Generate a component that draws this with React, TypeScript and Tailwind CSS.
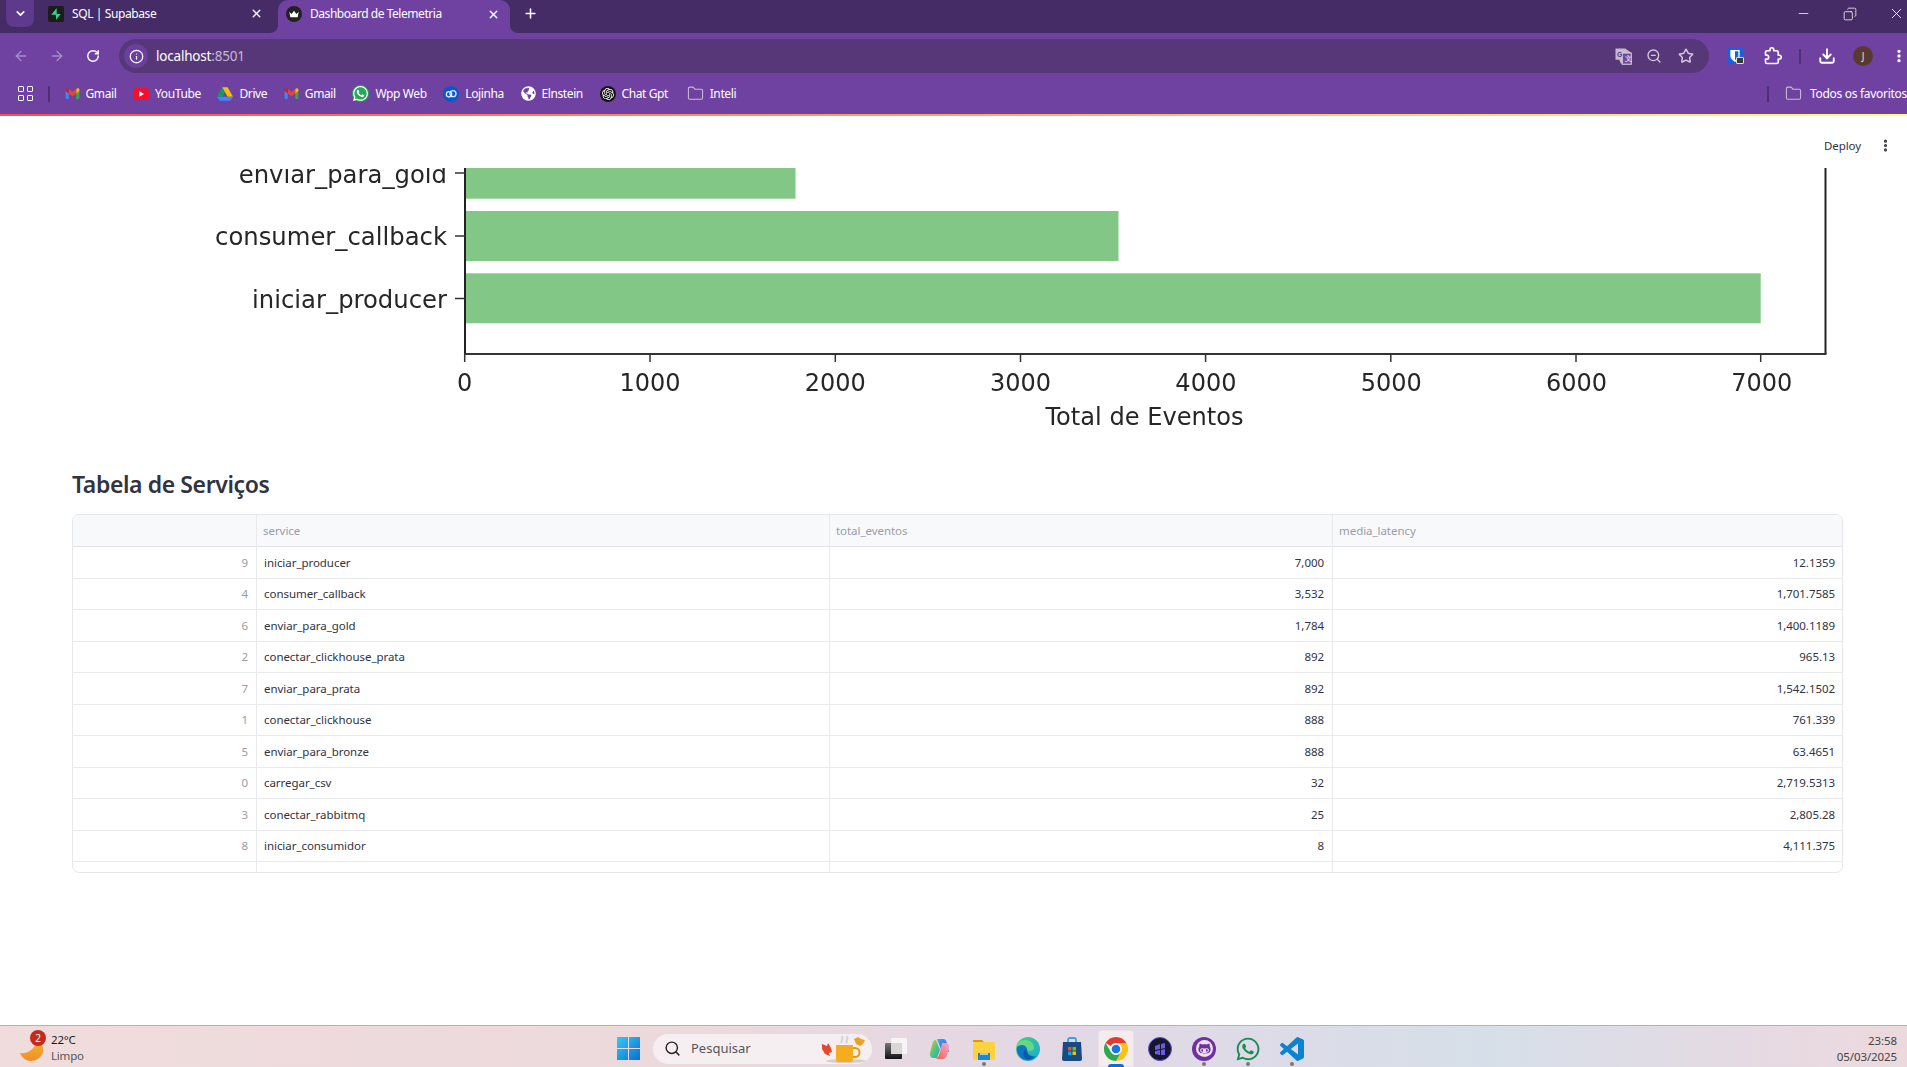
import React from "react";
import { ArrowLeft, ArrowRight, RotateCw, Info, ZoomOut, Star, Download, EllipsisVertical, Minus, X, Plus, ChevronDown, Search, Folder, Copy } from "lucide-react";
import { FaWhatsapp, FaGithubAlt, FaGlobeAmericas } from "react-icons/fa";
import { SiOpenai } from "react-icons/si";

const Gmail = () => (
  <svg width="15" height="16" viewBox="0 0 24 24" className="shrink-0">
    <path d="M1 20V6l5 4v10H3a2 2 0 0 1-2-2z" fill="#4285f4" />
    <path d="M23 20V6l-5 4v10h3a2 2 0 0 0 2-2z" fill="#34a853" />
    <path d="M18 4v7l5-4V5c0-2-2-3-3.500-2z" fill="#fbbc04" />
    <path d="M6 4v7l6 4.500 6-4.500V4l-6 4.500z" fill="#ea4335" />
    <path d="M1 5v2l5 4V4L4.500 3C3 2 1 3 1 5z" fill="#c5221f" />
  </svg>
);
const YouTube = () => (
  <svg width="16" height="16" viewBox="0 0 24 24" className="shrink-0">
    <rect x="0" y="3" width="24" height="18" rx="5" fill="#f50f2d" />
    <path d="M9.500 8v8l7-4z" fill="#fff" />
  </svg>
);
const Drive = () => (
  <svg width="16" height="16" viewBox="0 0 24 24" className="shrink-0">
    <path d="M8 2h8l-8 14H0z" fill="#0f9d58" />
    <path d="M16 2l8 14h-8L8 2z" fill="#fbbc04" />
    <path d="M0 16h24l-4 6H4z" fill="#4285f4" />
  </svg>
);
const Lojinha = () => (
  <svg width="16" height="16" viewBox="0 0 24 24" className="shrink-0">
    <circle cx="12" cy="12" r="12" fill="#0b57c9" />
    <circle cx="9" cy="12.500" r="4" fill="none" stroke="#dbe8ff" strokeWidth="2" />
    <circle cx="15" cy="11.500" r="4.500" fill="none" stroke="#dbe8ff" strokeWidth="2" />
  </svg>
);
const Bookmark = ({ icon, label }: { icon: React.ReactNode; label: string }) => (
  <div className="flex items-center gap-[6px] shrink-0">
    {icon}
    <span className="text-white text-[12px] leading-none tracking-[-0.4px]">{label}</span>
  </div>
);
const Supabase = () => (
  <svg width="16" height="16" viewBox="0 0 24 24" className="shrink-0">
    <rect width="24" height="24" rx="3" fill="#1c1c1c" />
    <path d="M13 3v9h6l-7 9v-8H5z" fill="#3ecf8e" />
  </svg>
);
const Crown = () => (
  <svg width="16" height="16" viewBox="0 0 24 24" className="shrink-0">
    <circle cx="12" cy="12" r="12" fill="#222" />
    <path d="M5 9l3.500 3L12 7l3.500 5L19 9l-1.500 8h-11z" fill="#fff" />
  </svg>
);
const Translate = () => (
  <svg width="18" height="18" viewBox="0 0 24 24" className="shrink-0">
    <path d="M2 2h13l7 5v15H9l-2-5H2z" fill="#c5bacf" />
    <rect x="11" y="8" width="12" height="15" fill="#6e4a9a" stroke="#d5cbdc" strokeWidth="1.500" />
    <text x="4" y="13" fontSize="9" fontWeight="700" fill="#5a3a80" fontFamily="Liberation Sans">G</text>
    <text x="14" y="19" fontSize="9" fontWeight="700" fill="#e0d8e6" fontFamily="Liberation Sans">文</text>
  </svg>
);
const Extension = () => (
  <svg width="18" height="18" viewBox="0 0 24 24" className="ml-[21px] shrink-0" fill="none" stroke="#fff" strokeWidth="2.200" strokeLinejoin="round">
    <path d="M20.500 11H19V7a2 2 0 0 0-2-2h-4V3.500a2.500 2.500 0 0 0-5 0V5H4a2 2 0 0 0-2 2v3.800h1.500a2.700 2.700 0 0 1 0 5.400H2V20a2 2 0 0 0 2 2h13a2 2 0 0 0 2-2v-4h1.500a2.500 2.500 0 0 0 0-5z" />
  </svg>
);
const Bitwarden = () => (
  <div className="relative w-[16px] h-[16px] bg-[#1a5fe0] shrink-0">
    <svg width="16" height="16" viewBox="0 0 24 24">
      <path d="M5 3h14v9c0 4-4 7-7 9-3-2-7-5-7-9z" fill="#fff" />
      <path d="M12 5h5v7c0 3-3 5-5 6.500z" fill="#1a5fe0" />
    </svg>
    <div className="absolute right-[-1px] bottom-0 w-[8px] h-[7px] rounded-[1px] bg-[#3a3a3a] border border-[#ddd]" />
  </div>
);
const WinLogo = () => (
  <svg width="23" height="23" viewBox="0 0 23 23" className="shrink-0">
    <defs>
      <linearGradient id="wl" x1="0" y1="0" x2="1" y2="1">
        <stop offset="0" stopColor="#38c8f5" />
        <stop offset="1" stopColor="#0a6fd0" />
      </linearGradient>
    </defs>
    <path d="M0 0h11v11H0zM12 0h11v11H12zM0 12h11v11H0zM12 12h11v11H12z" fill="url(#wl)" />
  </svg>
);
const Cup = () => (
  <svg width="48" height="30" viewBox="0 0 48 30" className="shrink-0">
    <ellipse cx="26" cy="27" rx="20" ry="2" fill="#d8cfc8" />
    <path d="M2 10l5 2 1-3 3 5 1 4-3 1 1 3-5-2-3-5z" fill="#e2492f" />
    <path d="M34 5l4-2 3 2 4 1-2 4-3 2-4-2z" fill="#f0a020" />
    <path d="M16 11h17v15a2 2 0 0 1-2 2H18a2 2 0 0 1-2-2z" fill="#f5ac1f" />
    <path d="M33 14h2a4 4 0 0 1 0 9h-2" fill="none" stroke="#e59a12" strokeWidth="2" />
    <path d="M22 9c-2-3 2-3 0-7M27 9c-2-3 2-3 0-7" fill="none" stroke="#d8d0d0" strokeWidth="2" />
  </svg>
);
const TaskView = () => (
  <svg width="24" height="24" viewBox="0 0 24 24">
    <defs>
      <linearGradient id="tv" x1="0" y1="0" x2="0" y2="1">
        <stop offset="0" stopColor="#777" />
        <stop offset="1" stopColor="#111" />
      </linearGradient>
    </defs>
    <rect x="7" y="1" width="16" height="16" rx="1" fill="#f7f4f5" />
    <rect x="1" y="6" width="17" height="16" rx="1" fill="url(#tv)" />
    <rect x="7" y="6" width="11" height="11" fill="#d8d6d7" />
  </svg>
);
const Copilot = () => (
  <svg width="24" height="24" viewBox="0 0 24 24">
    <defs>
      <linearGradient id="c1" x1="0" y1="0" x2="1" y2="1">
        <stop offset="0" stopColor="#2fb5e8" />
        <stop offset="0.5" stopColor="#3f7cf0" />
        <stop offset="1" stopColor="#a54fd8" />
      </linearGradient>
      <linearGradient id="c2" x1="0" y1="0" x2="1" y2="1">
        <stop offset="0" stopColor="#f2c12e" />
        <stop offset="0.5" stopColor="#50c87a" />
        <stop offset="1" stopColor="#2fa0d8" />
      </linearGradient>
      <linearGradient id="c3" x1="1" y1="0" x2="0" y2="1">
        <stop offset="0" stopColor="#f7a8d0" />
        <stop offset="1" stopColor="#f0604a" />
      </linearGradient>
    </defs>
    <path d="M9 2h6c2 0 3 1 3.500 3L21 15h-7z" fill="url(#c1)" />
    <path d="M8 3c-2 0-3 1-3.500 3L2 16c-.500 3 1 5 3.500 5H9l3-8z" fill="url(#c2)" />
    <path d="M14 6h4c2 0 3 2 3 4l-2 8c-.500 2-2 4-4 4H8c3-2 4-6 6-16z" fill="url(#c3)" />
  </svg>
);
const Explorer = () => (
  <svg width="24" height="24" viewBox="0 0 24 24">
    <path d="M1 3h9l2 2h-11z" fill="#d99a10" />
    <rect x="1" y="5" width="22" height="18" rx="1.500" fill="#fcd33f" />
    <rect x="6" y="16" width="12" height="7" fill="#1f86d6" />
    <rect x="8" y="16" width="8" height="2" fill="#8fd0f5" />
  </svg>
);
const Edge = () => (
  <svg width="24" height="24" viewBox="0 0 24 24">
    <defs>
      <linearGradient id="e1" x1="0" y1="0" x2="1" y2="1">
        <stop offset="0" stopColor="#37d67a" />
        <stop offset="1" stopColor="#1fa8d8" />
      </linearGradient>
    </defs>
    <circle cx="12" cy="12" r="12" fill="url(#e1)" />
    <path d="M0 12c0-6 4-9 9-9 5 0 9 3 9 8 0 2-2 3-4 3-2 0-3-1-3-2 0-3-9-5-11 0z" fill="#7de07a" opacity="0.7" />
    <path d="M1 10c3-3 9-3 10 2 0 5 4 8 9 7-3 4-7 5-10 4C4 22 0 16 1 10z" fill="#1173c6" />
    <path d="M10 12c0 5 4 8 8 8-2 2-6 3-8 2-3-2-4-7 0-10z" fill="#0d5aa8" />
  </svg>
);
const Store = () => (
  <svg width="24" height="24" viewBox="0 0 24 24">
    <path d="M8 6V3a2 2 0 0 1 2-2h4a2 2 0 0 1 2 2v3" fill="none" stroke="#3aa0e0" strokeWidth="1.800" />
    <path d="M3 5h18l1 17a2 2 0 0 1-2 2H4a2 2 0 0 1-2-2z" fill="#1b4a80" />
    <rect x="8" y="10" width="3.500" height="3.500" fill="#f25022" />
    <rect x="12.500" y="10" width="3.500" height="3.500" fill="#7fba00" />
    <rect x="8" y="14.500" width="3.500" height="3.500" fill="#00a4ef" />
    <rect x="12.500" y="14.500" width="3.500" height="3.500" fill="#ffb900" />
  </svg>
);
const Chrome = () => (
  <svg width="24" height="24" viewBox="0 0 24 24">
    <path d="M12 0A12 12 0 0 1 22.400 6H12A6 6 0 0 0 6.800 9L1.600 6A12 12 0 0 1 12 0z" fill="#e33b2e" />
    <path d="M22.400 6A12 12 0 0 1 12 24L17.200 15A6 6 0 0 0 12 6z" fill="#fbc116" />
    <path d="M1.600 6L6.800 15A6 6 0 0 0 17.200 15L12 24A12 12 0 0 1 1.600 6z" fill="#2da94f" />
    <circle cx="12" cy="12" r="5.500" fill="#fff" />
    <circle cx="12" cy="12" r="4.300" fill="#1a73e8" />
  </svg>
);
const Dark = () => (
  <svg width="24" height="24" viewBox="0 0 24 24">
    <circle cx="12" cy="12" r="11.500" fill="#16162c" stroke="#5a4fe0" strokeWidth="1" />
    <path d="M7 9l5-2v5l-5 1zM13 7l4-1v5l-4 1zM7 14l5-1v5l-5-1zM13 13l4-1v6l-4 0z" fill="#6a5ae0" />
  </svg>
);
const GithubApp = () => (
  <div className="w-[24px] h-[24px] rounded-full bg-[#7030a0] flex items-center justify-center">
    <div className="w-[17px] h-[17px] rounded-full bg-[#ece2f0] flex items-center justify-center">
      <FaGithubAlt className="text-[#7030a0] text-[13px]" />
    </div>
  </div>
);
const VSCode = () => (
  <svg width="24" height="24" viewBox="0 0 24 24">
    <path
      d="M23.150 2.587L18.210.21a1.494 1.494 0 0 0-1.705.29l-9.460 8.630-4.120-3.128a.999.999 0 0 0-1.276.057L.327 7.261A1 1 0 0 0 .326 8.740L3.899 12 .326 15.260a1 1 0 0 0 .001 1.479L1.650 17.940a.999.999 0 0 0 1.276.057l4.120-3.128 9.460 8.630a1.492 1.492 0 0 0 1.704.29l4.942-2.377A1.500 1.500 0 0 0 24 20.060V3.939a1.500 1.500 0 0 0-.850-1.352zm-5.146 14.861L10.826 12l7.178-5.448v10.896z"
      fill="#0d82d2"
    />
  </svg>
);

const rows = [
  ["9", "iniciar_producer", "7,000", "12.1359"],
  ["4", "consumer_callback", "3,532", "1,701.7585"],
  ["6", "enviar_para_gold", "1,784", "1,400.1189"],
  ["2", "conectar_clickhouse_prata", "892", "965.13"],
  ["7", "enviar_para_prata", "892", "1,542.1502"],
  ["1", "conectar_clickhouse", "888", "761.339"],
  ["5", "enviar_para_bronze", "888", "63.4651"],
  ["0", "carregar_csv", "32", "2,719.5313"],
  ["3", "conectar_rabbitmq", "25", "2,805.28"],
  ["8", "iniciar_consumidor", "8", "4,111.375"],
];

const Chart = () => (
  <svg viewBox="72 168 1770 272" className="block w-[1770px] h-[272px] blur-[0.4px]" fontFamily="DejaVu Sans, sans-serif" fill="#262626">
    <rect x="466" y="150" width="329.500" height="48.700" fill="#83c786" />
    <rect x="466" y="211" width="652.500" height="50" fill="#83c786" />
    <rect x="466" y="273.300" width="1294.700" height="50" fill="#83c786" />
    <path d="M465 160V354M1825.500 160V354" stroke="#222" strokeWidth="2" fill="none" />
    <path d="M464 354H1826.500" stroke="#333" strokeWidth="2" fill="none" />
    {[464.7, 650, 835.3, 1020.5, 1205.6, 1390.8, 1576, 1760.7].map((x) => (
      <path key={x} d={`M${x} 353V362`} stroke="#333" strokeWidth="1.500" />
    ))}
    {[173, 236, 298.500].map((y) => (
      <path key={y} d={`M455 ${y}H465`} stroke="#333" strokeWidth="1.500" />
    ))}
    {[
      ["enviar_para_gold", 182.7],
      ["consumer_callback", 245],
      ["iniciar_producer", 307.7],
    ].map(([t, y]) => (
      <text key={t as string} x="447" y={y as number} textAnchor="end" fontSize="24.300">
        {t}
      </text>
    ))}
    {[0, 1000, 2000, 3000, 4000, 5000, 6000, 7000].map((v, i) => (
      <text key={v} x={464.7 + 185.3 * i} y="390.500" textAnchor="middle" fontSize="24">
        {v}
      </text>
    ))}
    <text x="1144.500" y="424.500" textAnchor="middle" fontSize="24.100">
      Total de Eventos
    </text>
  </svg>
);

const Flare = ({ side }: { side: "l" | "r" }) =>
  side === "l" ? (
    <svg width="8" height="8" viewBox="0 0 8 8" className="absolute bottom-0 left-[-8px]">
      <path d="M8 0v8H0c4 0 8-3 8-8z" fill="#6f42a1" />
    </svg>
  ) : (
    <svg width="8" height="8" viewBox="0 0 8 8" className="absolute bottom-0 right-[-8px]">
      <path d="M0 0v8h8C4 8 0 5 0 0z" fill="#6f42a1" />
    </svg>
  );

export default function App() {
  return (
    <div className="h-screen w-full flex flex-col overflow-hidden bg-white font-['Noto_Sans',sans-serif]">
      {/* tab strip */}
      <div className="h-[33px] shrink-0 bg-[#452c66] flex items-start text-white">
        <div className="ml-[6px] mt-0 w-[28px] h-[27px] rounded-b-lg bg-[#5e3a8c] flex items-center justify-center">
          <ChevronDown size={13} strokeWidth={3} />
        </div>
        <div className="w-[244px] h-[27px] flex items-center pl-[14px] pr-[15px] gap-[8px]">
          <Supabase />
          <span className="text-[12px] leading-none tracking-[-0.4px]">SQL | Supabase</span>
          <X size={13} strokeWidth={2.5} className="ml-auto" />
        </div>
        <div className="relative w-[232px] h-[33px] rounded-t-[10px] bg-[#6f42a1] flex items-center pl-[8px] pr-[10px] gap-[8px] pb-[5px]">
          <Flare side="l" />
          <Crown />
          <span className="text-[12px] leading-none tracking-[-0.45px]">Dashboard de Telemetria</span>
          <X size={13} strokeWidth={2.5} className="ml-auto" />
          <Flare side="r" />
        </div>
        <div className="ml-[13px] h-[27px] flex items-center">
          <Plus size={15} strokeWidth={2.5} />
        </div>
        <div className="ml-auto h-[27px] flex items-center">
          <Minus size={15} strokeWidth={1.2} className="mr-[32px]" />
          <Copy size={14} strokeWidth={1.3} className="mr-[31px] -scale-x-100" />
          <X size={17} strokeWidth={1.2} className="mr-[2px]" />
        </div>
      </div>

      {/* toolbar */}
      <div className="h-[40px] shrink-0 bg-[#6f42a1] flex items-center pt-[6px] text-white">
        <ArrowLeft size={16} className="ml-[13px] text-[#a68cc4]" />
        <ArrowRight size={16} className="ml-[20px] text-[#a68cc4]" />
        <RotateCw size={14} strokeWidth={2.5} className="ml-[21px]" />
        <div className="ml-[19px] w-[1590px] h-[34px] rounded-full bg-[#563878] flex items-center pl-[5px]">
          <div className="w-[24px] h-[24px] rounded-full bg-[#6b3f9c] flex items-center justify-center">
            <Info size={15} />
          </div>
          <span className="ml-[8px] text-[13.500px] leading-none tracking-[-0.2px] pt-[1px]">
            localhost<span className="text-[#c6b6d8]">:8501</span>
          </span>
          <div className="ml-auto flex items-center pr-[15px] text-[#d4c8e0]">
            <Translate />
            <ZoomOut size={16} className="ml-[14px]" />
            <Star size={16} strokeWidth={2.2} className="ml-[16px]" />
          </div>
        </div>
        <div className="ml-[18px]">
          <Bitwarden />
        </div>
        <Extension />
        <div className="ml-[17px] w-[2px] h-[15px] bg-[#4d2f72]" />
        <Download size={18} strokeWidth={2.5} className="ml-[17px]" />
        <div className="ml-[17px] w-[20px] h-[20px] rounded-full bg-[#5a3a2e] flex items-center justify-center text-[10px] leading-none text-[#e8dcd4]">J</div>
        <EllipsisVertical size={16} strokeWidth={3} className="ml-[18px]" />
      </div>

      {/* bookmarks */}
      <div className="h-[41px] shrink-0 bg-[#6f42a1] flex items-center text-white">
        <div className="ml-[18px] grid grid-cols-2 gap-[3px] w-[15px] shrink-0">
          {[0, 1, 2, 3].map((i) => (
            <div key={i} className="h-[6px] border-[1.5px] border-white rounded-[1px]" />
          ))}
        </div>
        <div className="ml-[15px] w-[1.5px] h-[16px] bg-[#4d2f72]" />
        <div className="ml-[15px] flex items-center gap-[16.700px]">
          <Bookmark icon={<Gmail />} label="Gmail" />
          <Bookmark icon={<YouTube />} label="YouTube" />
          <Bookmark icon={<Drive />} label="Drive" />
          <Bookmark icon={<Gmail />} label="Gmail" />
          <Bookmark
            icon={
              <div className="w-[17px] h-[17px] rounded-full bg-[#25a85a] shrink-0">
                <FaWhatsapp className="text-[17px]" />
              </div>
            }
            label="Wpp Web"
          />
          <Bookmark icon={<Lojinha />} label="Lojinha" />
          <Bookmark icon={<FaGlobeAmericas className="text-[15px] shrink-0" />} label="Elnstein" />
          <Bookmark
            icon={
              <div className="w-[16px] h-[16px] rounded-full bg-[#151515] flex items-center justify-center shrink-0">
                <SiOpenai className="text-[12px] text-white" />
              </div>
            }
            label="Chat Gpt"
          />
          <div className="ml-[2px]">
            <Bookmark icon={<Folder size={17} strokeWidth={1.5} className="text-[#c9bcd6]" />} label="Inteli" />
          </div>
        </div>
        <div className="ml-auto flex items-center shrink-0">
          <div className="w-[2px] h-[16px] bg-[#4d2f72]" />
          <Folder size={17} strokeWidth={1.5} className="ml-[16px] text-[#c9bcd6]" />
          <span className="ml-[8px] text-[12px] leading-none tracking-[-0.3px] whitespace-nowrap w-[97px]">Todos os favoritos</span>
        </div>
      </div>

      {/* streamlit */}
      <main className="relative flex-1 min-h-0 bg-white pl-[72px] pr-[64px] pt-[54px]">
        <div className="absolute top-0 left-0 right-0 h-[2px] bg-[linear-gradient(to_right,#ff4b4b,#fffd80)]" />
        <div className="absolute top-[24px] right-[14px] flex items-center text-[#31333f]">
          <span className="text-[11.500px] leading-none tracking-[-0.1px]">Deploy</span>
          <EllipsisVertical size={15} strokeWidth={3} className="ml-[17px]" />
        </div>
        <Chart />
        <h2 className="mt-[28px] h-[32px] flex items-center text-[23px] leading-none font-semibold text-[#31333f] tracking-[-0.4px]">Tabela de Serviços</h2>
        <div className="mt-[14px] h-[359px] rounded-[7px] border border-[#e6e7eb] overflow-hidden text-[11.500px] tracking-[-0.05px]">
          <div className="flex h-[32px] bg-[#f8f9fb] border-b border-[#e3e4ea] text-[#9a9ca8]">
            <div className="w-[184px] shrink-0 border-r border-[#e9eaee]" />
            <div className="w-[573px] shrink-0 border-r border-[#e9eaee] flex items-center pl-[6px]">service</div>
            <div className="w-[503px] shrink-0 border-r border-[#e9eaee] flex items-center pl-[6px]">total_eventos</div>
            <div className="flex-1 flex items-center pl-[6px]">media_latency</div>
          </div>
          {rows.map((r) => (
            <div key={r[0]} className="flex h-[31.500px] border-b border-[#e9eaee] text-[#31333f]">
              <div className="w-[184px] shrink-0 border-r border-[#e9eaee] flex items-center justify-end pr-[8px] text-[#9a9ca8]">{r[0]}</div>
              <div className="w-[573px] shrink-0 border-r border-[#e9eaee] flex items-center pl-[7px]">{r[1]}</div>
              <div className="w-[503px] shrink-0 border-r border-[#e9eaee] flex items-center justify-end pr-[8px]">{r[2]}</div>
              <div className="flex-1 flex items-center justify-end pr-[7px]">{r[3]}</div>
            </div>
          ))}
          <div className="flex h-[12px]">
            <div className="w-[184px] shrink-0 border-r border-[#e9eaee]" />
            <div className="w-[573px] shrink-0 border-r border-[#e9eaee]" />
            <div className="w-[503px] shrink-0 border-r border-[#e9eaee]" />
          </div>
        </div>
      </main>

      {/* taskbar */}
      <div className="h-[42px] shrink-0 border-t border-[#bbb1b3] bg-[linear-gradient(90deg,#f0dcdc_0%,#ecd9dc_35%,#e3d8e5_55%,#d6dfe9_78%,#e6dae3_92%,#edd9dd_100%)] flex items-center">
        <div className="relative mt-[4px] ml-[20px] w-[24px] h-[24px] shrink-0">
          <svg width="24" height="22" viewBox="0 0 24 22" className="absolute top-[3px] left-0">
            <defs>
              <linearGradient id="mo" x1="0" y1="0" x2="0" y2="1">
                <stop offset="0" stopColor="#f8b12c" />
                <stop offset="1" stopColor="#ef8f2a" />
              </linearGradient>
            </defs>
            <path d="M0 13c8 1 15-4 17-13 5 3 7 8 6 12-2 6-7 9-12 9-5 0-9-3-11-8z" fill="url(#mo)" />
          </svg>
          <div className="absolute top-[-7px] left-[10px] w-[16px] h-[16px] rounded-full bg-[#c42b1c] text-white text-[10px] leading-none flex items-center justify-center">2</div>
        </div>
        <div className="mt-[3px] ml-[7px] w-[60px] flex flex-col text-[11.500px] leading-[16px] tracking-[-0.2px]">
          <span className="text-[#1c1c1c]">22°C</span>
          <span className="text-[#555]">Limpo</span>
        </div>
        <div className="mt-[4px] ml-[506px]">
          <WinLogo />
        </div>
        <div className="mt-[4px] ml-[13px] w-[219px] h-[30px] rounded-full bg-[#f6eff2] flex items-center pl-[11px] pr-[4px]">
          <Search size={17} strokeWidth={2} className="text-[#222]" />
          <span className="ml-[10px] text-[13px] leading-none text-[#555]">Pesquisar</span>
          <div className="ml-auto">
            <Cup />
          </div>
        </div>
        <div className="ml-[2px] flex items-center h-full">
          {[
            { n: <TaskView /> },
            { n: <Copilot /> },
            { n: <Explorer />, dot: true },
            { n: <Edge /> },
            { n: <Store /> },
            { n: <Chrome />, active: true },
            { n: <Dark /> },
            { n: <GithubApp />, dot: true },
            { n: <FaWhatsapp className="text-[26px] text-[#1c8a55]" />, dot: true },
            { n: <VSCode />, dot: true },
          ].map((it, i) => (
            <div key={i} className="relative w-[44px] h-full pt-[4px] flex items-center justify-center">
              {it.active && <div className="absolute top-[4px] left-[4px] right-[4px] bottom-0 rounded-t-[4px] bg-[#f5ecee] border border-[#ece2e4]" />}
              <div className="relative">{it.n}</div>
              {it.dot && <div className="absolute bottom-[1px] left-1/2 -ml-[2px] w-[4px] h-[4px] rounded-full bg-[#777]" />}
              {it.active && <div className="absolute bottom-0 left-1/2 -ml-[8px] w-[16px] h-[3px] rounded-t-sm bg-[#0a6fd0]" />}
            </div>
          ))}
        </div>
        <div className="mt-[4px] ml-auto pr-[10px] flex flex-col items-end text-[11.500px] leading-[16px] text-[#444] tracking-[-0.1px]">
          <span>23:58</span>
          <span>05/03/2025</span>
        </div>
      </div>
    </div>
  );
}
